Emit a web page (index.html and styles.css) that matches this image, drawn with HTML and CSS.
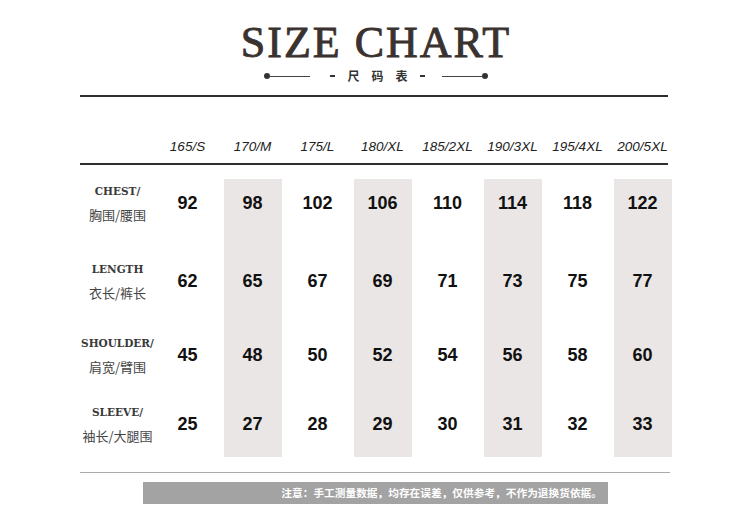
FILE: index.html
```html
<!DOCTYPE html>
<html lang="zh">
<head>
<meta charset="utf-8">
<title>Size Chart</title>
<link rel="stylesheet" href="styles.css">
</head>
<body>
<div class="page">
  <header class="head">
    <h1 class="title">SIZE CHART</h1>
    <div class="sub">
      <span class="dot"></span><span class="line"></span>
      <span class="sub-text"><span class="dash"></span><span>尺</span><span>码</span><span>表</span><span class="dash"></span></span>
      <span class="line"></span><span class="dot"></span>
    </div>
  </header>

  <div class="rule rule-dark rule-top"></div>

  <div class="grid sizes">
    <span></span>
    <span>165/S</span><span>170/M</span><span>175/L</span><span>180/XL</span>
    <span>185/2XL</span><span>190/3XL</span><span>195/4XL</span><span>200/5XL</span>
  </div>

  <div class="rule rule-dark rule-mid"></div>

  <div class="body">
    <div class="grid row r1">
      <div class="lab"><span class="en">CHEST/</span><span class="zh">胸围/腰围</span></div>
      <div class="c">92</div><div class="c">98</div><div class="c">102</div><div class="c">106</div>
      <div class="c">110</div><div class="c">114</div><div class="c">118</div><div class="c">122</div>
    </div>
    <div class="grid row r2">
      <div class="lab"><span class="en">LENGTH</span><span class="zh">衣长/裤长</span></div>
      <div class="c">62</div><div class="c">65</div><div class="c">67</div><div class="c">69</div>
      <div class="c">71</div><div class="c">73</div><div class="c">75</div><div class="c">77</div>
    </div>
    <div class="grid row r3">
      <div class="lab"><span class="en">SHOULDER/</span><span class="zh">肩宽/臂围</span></div>
      <div class="c">45</div><div class="c">48</div><div class="c">50</div><div class="c">52</div>
      <div class="c">54</div><div class="c">56</div><div class="c">58</div><div class="c">60</div>
    </div>
    <div class="grid row r4">
      <div class="lab"><span class="en">SLEEVE/</span><span class="zh">袖长/大腿围</span></div>
      <div class="c">25</div><div class="c">27</div><div class="c">28</div><div class="c">29</div>
      <div class="c">30</div><div class="c">31</div><div class="c">32</div><div class="c">33</div>
    </div>
  </div>

  <div class="rule rule-light"></div>

  <div class="note">注意：手工测量数据，均存在误差，仅供参考，不作为退换货依据。</div>
</div>
</body>
</html>
```

FILE: styles.css
```css
* { box-sizing: border-box; margin: 0; padding: 0; }

html, body {
  background: #ffffff;
}

body {
  width: 750px;
  height: 523px;
  overflow: hidden;
  font-family: "Liberation Sans", Arial, sans-serif;
  color: #111;
}

.page {
  padding-top: 21px;
}

.head {
  display: flex;
  flex-direction: column;
  align-items: center;
}

.title {
  font-family: "Liberation Serif", "Times New Roman", serif;
  font-weight: normal;
  font-size: 44px;
  line-height: 43px;
  letter-spacing: 2px;
  margin-right: -2px;
  color: #3a322f;
  -webkit-text-stroke: 0.9px #3a322f;
}

.sub {
  margin-top: 5px;
  height: 14px;
  display: flex;
  align-items: center;
  margin-left: 2px;
}

.dot {
  width: 6px;
  height: 6px;
  border-radius: 50%;
  background: #333;
}

.line {
  width: 40px;
  height: 1px;
  background: #444;
}

.sub-text {
  display: flex;
  align-items: center;
  gap: 12px;
  margin: 0 17px 0 20px;
  font-family: "Noto Sans CJK SC", sans-serif;
  font-size: 12px;
  line-height: 14px;
  font-weight: bold;
  color: #333;
}

.dash {
  width: 5px;
  height: 2px;
  background: #333;
}

.rule {
  margin-left: 80px;
  width: 588px;
}

.rule-dark {
  height: 2px;
  background: #2e2e2e;
}

.rule-top {
  margin-top: 12px;
}

.rule-mid {
  margin-top: 4px;
}

.grid {
  display: grid;
  grid-template-columns: 75px repeat(8, 65px);
  margin-left: 80px;
}

.sizes {
  margin-top: 38px;
  height: 24px;
  line-height: 24px;
  font-size: 13.5px;
  font-style: italic;
  color: #222;
  text-align: center;
  white-space: nowrap;
}

.body {
  margin-top: 14px;
}

.row > * {
  height: 48px;
  box-sizing: content-box;
}

.r2 > * { padding-top: 30px; }
.r3 > * { padding-top: 26px; }
.r4 > * { padding-top: 21px; padding-bottom: 9px; }

.c {
  display: flex;
  align-items: center;
  justify-content: center;
  font-size: 18px;
  font-weight: bold;
  color: #111;
}

.row > .c:nth-child(2n+3) {
  background: #e9e6e5;
  margin: 0 3.5px;
}

.lab {
  display: flex;
  flex-direction: column;
  align-items: center;
  justify-content: center;
  white-space: nowrap;
}

.en {
  font-family: "DejaVu Serif", serif;
  font-weight: bold;
  font-size: 10.5px;
  line-height: 24px;
  color: #3a3a3a;
}

.zh {
  font-family: "Noto Sans CJK SC", sans-serif;
  font-size: 13px;
  line-height: 24px;
  color: #444;
}

.rule-light {
  margin-top: 15px;
  width: 590px;
  height: 1px;
  background: #aaaaaa;
}

.note {
  margin: 9px 0 0 143px;
  width: 465px;
  height: 22px;
  background: #a3a3a3;
  color: #fff;
  font-family: "Noto Sans CJK SC", sans-serif;
  font-size: 10.7px;
  font-weight: bold;
  line-height: 22px;
  text-align: right;
  padding-right: 6px;
  white-space: nowrap;
}
```
